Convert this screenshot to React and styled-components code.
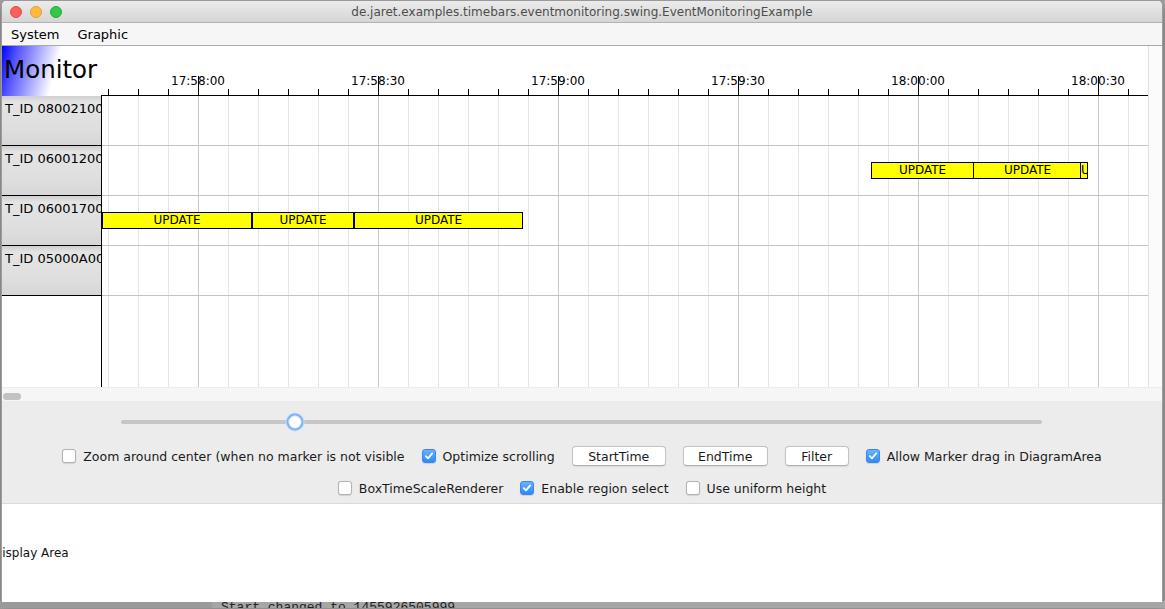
import React from 'react';
import styled, { createGlobalStyle } from 'styled-components';

const GlobalStyle = createGlobalStyle`
  html, body {
    margin: 0;
    padding: 0;
  }
  body {
    width: 1165px;
    height: 609px;
    overflow: hidden;
    background: #a2a2a2;
    font-family: "DejaVu Sans", sans-serif;
    color: #000;
  }
`

// chart geometry: 6px per second, chart x 0 = 17:57:44
const PX_PER_SEC = 6;
const FIRST_MAJOR = 96;
const majorTicks = [0, 1, 2, 3, 4, 5].map(i => {
  const total = 17 * 3600 + 58 * 60 + i * 30;
  const h = Math.floor(total / 3600);
  const m = Math.floor((total % 3600) / 60);
  const s = total % 60;
  const pad = n => String(n).padStart(2, '0');
  return { x: FIRST_MAJOR + i * 30 * PX_PER_SEC, label: `${h}:${pad(m)}:${pad(s)}` };
});

const rows = [
  { id: 'T_ID 08002100', events: [] },
  {
    id: 'T_ID 06001200',
    events: [
      { left: 769, width: 103 },
      { left: 871, width: 109 },
      { left: 978, width: 8 },
    ],
  },
  {
    id: 'T_ID 06001700',
    events: [
      { left: 0, width: 150 },
      { left: 150, width: 102 },
      { left: 252, width: 169 },
    ],
  },
  { id: 'T_ID 05000A00', events: [] },
];

const Check = ({ checked, label }) => (
  <CheckItem>
    <CheckBox checked={checked}>
      {checked && (
        <svg width="10" height="10" viewBox="0 0 10 10">
          <path d="M1.8 5.2 L4 7.4 L8.2 2.4" fill="none" stroke="#fff" strokeWidth="1.7" strokeLinecap="round" strokeLinejoin="round" />
        </svg>
      )}
    </CheckBox>
    <span>{label}</span>
  </CheckItem>
);

function App() {
  return (
    <>
      <GlobalStyle />
      <Window>
        <TitleBar>
          <Lights>
            <Light color="#fc605c" edge="#de4a45" />
            <Light color="#fdbc40" edge="#dea033" />
            <Light color="#34c84a" edge="#27a93a" />
          </Lights>
          <Title>de.jaret.examples.timebars.eventmonitoring.swing.EventMonitoringExample</Title>
          <span />
        </TitleBar>
        <MenuBar>
          <MenuItem>System</MenuItem>
          <MenuItem>Graphic</MenuItem>
        </MenuBar>

        <Chart>
          <HeaderColumn>
            <Corner>Monitor</Corner>
            <HeaderBody>
              {rows.map(r => (
                <RowHeader key={r.id}>{r.id}</RowHeader>
              ))}
            </HeaderBody>
          </HeaderColumn>
          <PlotColumn>
            <TimeScale>
              {majorTicks.map(t => (
                <TickLabel key={t.label} style={{ left: t.x }}>{t.label}</TickLabel>
              ))}
            </TimeScale>
            <PlotBody>
              {rows.map(r => (
                <PlotRow key={r.id}>
                  {r.events.map((e, i) => (
                    <EventBar key={i} style={{ left: e.left, width: e.width }}>UPDATE</EventBar>
                  ))}
                </PlotRow>
              ))}
            </PlotBody>
          </PlotColumn>
          <VTrack />
        </Chart>

        <HScroll>
          <HThumb />
        </HScroll>

        <ControlPanel>
          <SliderRow>
            <SliderTrack>
              <SliderKnob style={{ left: '18.9%' }} />
            </SliderTrack>
          </SliderRow>
          <OptionRow>
            <Check label="Zoom around center (when no marker is not visible" />
            <Check checked label="Optimize scrolling" />
            <Button w={94}>StartTime</Button>
            <Button w={85}>EndTime</Button>
            <Button w={64}>Filter</Button>
            <Check checked label="Allow Marker drag in DiagramArea" />
          </OptionRow>
          <OptionRow second>
            <Check label="BoxTimeScaleRenderer" />
            <Check checked label="Enable region select" />
            <Check label="Use uniform height" />
          </OptionRow>
        </ControlPanel>

        <DisplayArea>
          <DisplayLabel>Display Area</DisplayLabel>
        </DisplayArea>
      </Window>
      <Console>Start changed to 1455926505999</Console>
    </>
  );
}

const Window = styled.div`
  margin: 1px 0 0 1px;
  width: 1162px;
  height: 601px;
  box-sizing: border-box;
  border-left: 1px solid #9c9c9c;
  border-right: 1px solid #9c9c9c;
  display: flex;
  flex-direction: column;
  background: #fff;
  border-radius: 5px 5px 0 0;
  box-shadow: 0 4px 10px rgba(0, 0, 0, 0.35);
  overflow: hidden;
`

const TitleBar = styled.div`
  height: 22px;
  flex: none;
  box-sizing: border-box;
  display: grid;
  grid-template-columns: 1fr auto 1fr;
  align-items: center;
  background: linear-gradient(#ebebeb, #d5d5d5);
  border-bottom: 1px solid #b3b3b3;
`

const Lights = styled.div`
  display: flex;
  gap: 8px;
  padding-left: 8px;
`

const Light = styled.div`
  width: 12px;
  height: 12px;
  border-radius: 50%;
  box-sizing: border-box;
  background: ${props => props.color};
  border: 0.5px solid ${props => props.edge};
`

const Title = styled.div`
  font-size: 12px;
  color: #4d4d4d;
  white-space: nowrap;
`

const MenuBar = styled.div`
  height: 23px;
  flex: none;
  box-sizing: border-box;
  display: flex;
  align-items: center;
  gap: 18px;
  padding-left: 9px;
  background: #f6f6f6;
  border-bottom: 1px solid #a9a9a9;
`

const MenuItem = styled.span`
  font-size: 13px;
`

const Chart = styled.div`
  height: 341px;
  flex: none;
  display: flex;
`

const HeaderColumn = styled.div`
  width: 100px;
  flex: none;
  display: flex;
  flex-direction: column;
`

const Corner = styled.div`
  height: 50px;
  flex: none;
  box-sizing: border-box;
  padding: 10px 0 0 2px;
  font-size: 24.5px;
  line-height: 28px;
  white-space: nowrap;
  background: linear-gradient(105deg, #0000ff 0px, #4a4aff 14px, #ffffff 58px);
`

const HeaderBody = styled.div`
  flex: 1;
  border-right: 1px solid #000;
`

const RowHeader = styled.div`
  height: 50px;
  box-sizing: border-box;
  padding: 5px 0 0 3px;
  font-size: 13px;
  line-height: 15px;
  white-space: nowrap;
  overflow: hidden;
  border-bottom: 1px solid #000;
  background: linear-gradient(#cfcfcf 0px, #e4e4e4 6px, #dedede 70%, #d6d6d6 100%);
`

const PlotColumn = styled.div`
  width: 1046px;
  flex: none;
  display: flex;
  flex-direction: column;
  border-right: 1px solid #e2e2e2;
`

const TimeScale = styled.div`
  position: relative;
  height: 50px;
  flex: none;
  box-sizing: border-box;
  border-bottom: 1px solid #000;
  margin-left: -1px;
  background-image:
    repeating-linear-gradient(to right, transparent 0 97px, #000 97px 98px, transparent 98px 180px),
    repeating-linear-gradient(to right, transparent 0 7px, #000 7px 8px, transparent 8px 30px);
  background-size: 100% 19px, 100% 6px;
  background-position: left bottom, left bottom;
  background-repeat: no-repeat;
`

const TickLabel = styled.span`
  position: absolute;
  top: 28px;
  margin-left: 1px;
  transform: translateX(-50%);
  font-size: 12px;
  line-height: 14px;
  white-space: nowrap;
`

const PlotBody = styled.div`
  flex: 1;
  background-image:
    repeating-linear-gradient(to right, transparent 0 96px, #c9c9c9 96px 97px, transparent 97px 180px),
    repeating-linear-gradient(to right, transparent 0 6px, #e4e4e4 6px 7px, transparent 7px 30px);
`

const PlotRow = styled.div`
  position: relative;
  height: 50px;
  box-sizing: border-box;
  border-bottom: 1px solid #c3c3c3;
`

const EventBar = styled.div`
  position: absolute;
  top: 16px;
  height: 17px;
  box-sizing: border-box;
  border: 1px solid #000;
  background: #ffff00;
  font-size: 12px;
  line-height: 15px;
  text-align: center;
  white-space: nowrap;
  overflow: hidden;
`

const VTrack = styled.div`
  flex: 1;
  background: #fbfbfb;
`

const HScroll = styled.div`
  height: 14px;
  flex: none;
  box-sizing: border-box;
  padding: 5px 0 0 1px;
  background: #f6f6f6;
  border-top: 1px solid #ececec;
`

const HThumb = styled.div`
  width: 18px;
  height: 7px;
  border-radius: 4px;
  background: #c2c2c2;
`

const ControlPanel = styled.div`
  height: 103px;
  flex: none;
  box-sizing: border-box;
  display: flex;
  flex-direction: column;
  align-items: center;
  padding-top: 11px;
  background: #ececec;
  border-bottom: 1px solid #dadada;
`

const SliderRow = styled.div`
  width: 921px;
  height: 20px;
  display: flex;
  align-items: center;
  margin-left: -2px;
`

const SliderTrack = styled.div`
  position: relative;
  width: 100%;
  height: 4px;
  border-radius: 2px;
  background: #c6c6c6;
`

const SliderKnob = styled.div`
  position: absolute;
  top: 50%;
  width: 17px;
  height: 17px;
  box-sizing: border-box;
  transform: translate(-50%, -50%);
  border-radius: 50%;
  background: #fff;
  border: 2px solid #7eb2f3;
  box-shadow: 0 0 0 1px #c9def9, inset 0 0 0 1px #dbe8f9;
`

const OptionRow = styled.div`
  height: 22px;
  margin-top: ${props => (props.second ? '10px' : '13px')};
  display: flex;
  align-items: center;
  gap: 17px;
  font-size: 12.5px;
  color: #1a1a1a;
`

const CheckItem = styled.label`
  display: flex;
  align-items: center;
  gap: 7px;
  white-space: nowrap;
`

const CheckBox = styled.span`
  width: 14px;
  height: 14px;
  box-sizing: border-box;
  border-radius: 3px;
  display: flex;
  align-items: center;
  justify-content: center;
  border: 1px solid ${props => (props.checked ? '#3a86ea' : '#b3b3b3')};
  background: ${props => (props.checked ? 'linear-gradient(#6ab2fb, #2a8afa)' : '#fff')};
  box-shadow: 0 0.5px 1px rgba(0, 0, 0, 0.12);
`

const Button = styled.button`
  width: ${props => props.w}px;
  height: 20px;
  padding: 0;
  font-family: "DejaVu Sans", sans-serif;
  font-size: 12.5px;
  color: #1a1a1a;
  background: #fff;
  border: 1px solid #c3c3c3;
  border-bottom-color: #b0b0b0;
  border-radius: 4px;
  box-shadow: 0 0.5px 1px rgba(0, 0, 0, 0.08);
`

const DisplayArea = styled.div`
  flex: 1;
  display: flex;
  align-items: center;
  overflow: hidden;
  background: #fff;
`

const DisplayLabel = styled.span`
  margin-left: -9px;
  font-size: 12px;
  color: #111;
  white-space: nowrap;
`

const Console = styled.div`
  height: 7px;
  overflow: hidden;
  padding-left: 221px;
  margin-top: -1px;
  font-family: "Liberation Mono", monospace;
  font-size: 13px;
  line-height: 13px;
  color: #222;
  white-space: nowrap;
  background: linear-gradient(to right, #9a9a9a 0 212px, #a6a6a6 212px);
`

export default App;
